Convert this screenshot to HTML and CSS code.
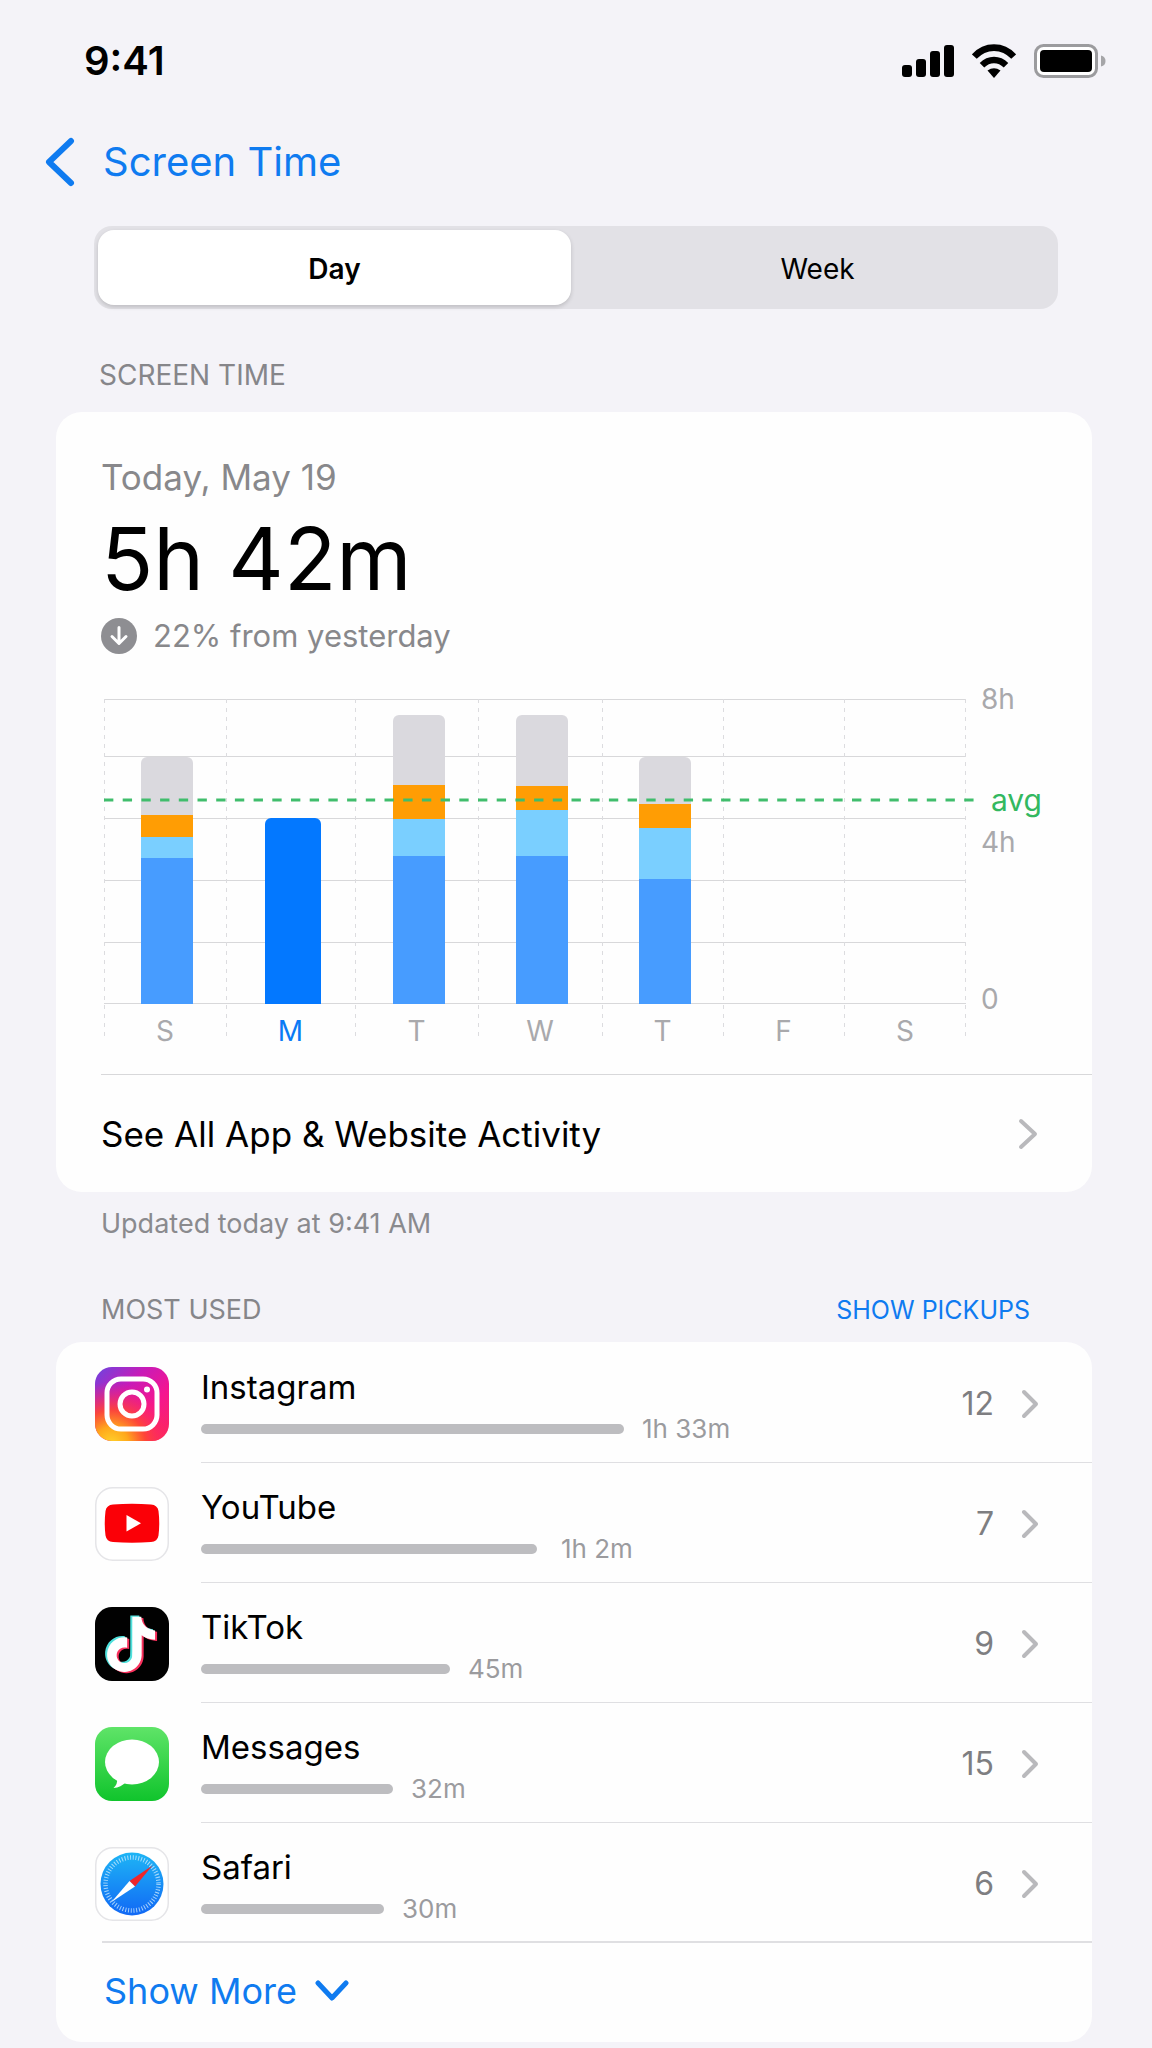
FILE: index.html
```html
<!DOCTYPE html>
<html lang="en">
<head>
<meta charset="utf-8">
<meta name="viewport" content="width=device-width, initial-scale=1">
<title>Screen Time</title>
<link rel="stylesheet" href="styles.css">
</head>
<body>
<div class="screen">
  <div class="status">
    <time class="clock">9:41</time>
    <div class="status-icons">
      <svg width="52" height="34" viewBox="0 0 52 34" aria-label="Signal" role="img">
        <rect x="0" y="21" width="10" height="12" rx="3"/><rect x="14" y="15" width="10" height="18" rx="3"/><rect x="28" y="7" width="10" height="26" rx="3"/><rect x="42" y="1" width="10" height="32" rx="3"/>
      </svg>
      <svg width="44" height="34" viewBox="0 0 44 34" aria-label="Wi-Fi" role="img">
        <g fill="none" stroke="#000"><path d="M2.3 12.6Q10.5 3.6 22 3.6T41.700 12.600" stroke-width="6.600"/><path d="M10 21.200Q15.200 16 22 16T34 21.200" stroke-width="6.400"/></g>
        <path d="M15.500 26.500Q22 21.800 28.500 26.500L22 34Z"/>
      </svg>
      <svg width="72" height="34" viewBox="0 0 72 34" aria-label="Battery" role="img">
        <rect x="1.500" y="1.500" width="61" height="31" rx="8" fill="#fff" stroke="#9b9b9e" stroke-width="3"/>
        <rect x="6" y="6" width="52" height="22" rx="4"/>
        <path d="M67 11.500Q71.500 12.500 71.500 17T67 22.500Z" fill="#a5a5a8"/>
      </svg>
    </div>
  </div>

  <nav>
    <a class="back" href="#">
      <svg width="30" height="50" viewBox="0 0 30 50" aria-hidden="true"><path d="M26 4L4 25L26 46" fill="none" stroke="currentColor" stroke-width="6" stroke-linecap="round" stroke-linejoin="round"/></svg>
      Screen Time
    </a>
  </nav>

  <div class="segmented" role="group" aria-label="Period">
    <button type="button" class="segment active" aria-pressed="true">Day</button>
    <button type="button" class="segment" aria-pressed="false">Week</button>
  </div>

  <h2 class="section-title">SCREEN TIME</h2>
  <section class="card usage">
    <p class="date">Today, May 19</p>
    <p class="total">5h 42m</p>
    <p class="trend">
      <svg width="36" height="36" viewBox="0 0 36 36" aria-hidden="true"><circle cx="18" cy="18" r="18" fill="#8e8e92"/><path d="M18 9.500V25M11 18.500L18 25.500L25 18.500" fill="none" stroke="#fff" stroke-width="3" stroke-linecap="round" stroke-linejoin="round"/></svg>
      22% from yesterday
    </p>

    <div class="chart">
      <div class="gridlines"><i></i><i></i><i></i><i></i><i></i></div>
      <div class="plot">
        <div class="day"><div class="bar"><i class="other" style="height:58px"></i><i class="orange" style="height:22px"></i><i class="sky" style="height:21px"></i><i class="blue" style="height:146px"></i></div><span>S</span></div>
        <div class="day today"><div class="bar"><i class="solid" style="height:186px"></i></div><span>M</span></div>
        <div class="day"><div class="bar"><i class="other" style="height:70px"></i><i class="orange" style="height:34px"></i><i class="sky" style="height:37px"></i><i class="blue" style="height:148px"></i></div><span>T</span></div>
        <div class="day"><div class="bar"><i class="other" style="height:71px"></i><i class="orange" style="height:24px"></i><i class="sky" style="height:46px"></i><i class="blue" style="height:148px"></i></div><span>W</span></div>
        <div class="day"><div class="bar"><i class="other" style="height:47px"></i><i class="orange" style="height:24px"></i><i class="sky" style="height:51px"></i><i class="blue" style="height:125px"></i></div><span>T</span></div>
        <div class="day"><div class="bar"></div><span>F</span></div>
        <div class="day last"><div class="bar"></div><span>S</span></div>
      </div>
      <div class="axis"><span>8h</span><span>4h</span><span>0</span></div>
      <div class="average">
        <div class="average-line"><svg width="100%" height="4" aria-hidden="true"><line x1="0" y1="2" x2="100%" y2="2" pathLength="470" stroke="#40bd6c" stroke-width="3" stroke-dasharray="5 5"/></svg></div>
        <span>avg</span>
      </div>
    </div>

    <a class="see-all" href="#">See All App &amp; Website Activity
      <svg class="chevron" width="20" height="32" viewBox="0 0 20 32" aria-hidden="true"><path d="M3 3L17 16L3 29"/></svg>
    </a>
  </section>
  <p class="updated">Updated today at 9:41 AM</p>

  <div class="section-head">
    <h2>MOST USED</h2>
    <button type="button" class="pickups">SHOW PICKUPS</button>
  </div>
  <section class="card">
    <ul class="apps">
      <li><a class="app" href="#">
        <svg class="icon" viewBox="0 0 74 74" aria-hidden="true">
          <defs>
            <linearGradient id="ig-base" x1="0" y1="0" x2="1" y2="1"><stop offset="0" stop-color="#6a45e0"/><stop offset=".35" stop-color="#c81bb8"/><stop offset=".65" stop-color="#f5158f"/><stop offset="1" stop-color="#fb2a58"/></linearGradient>
            <radialGradient id="ig-warm" cx=".22" cy="1.050" r=".85"><stop offset="0" stop-color="#ffd52b"/><stop offset=".28" stop-color="#ffa81c"/><stop offset=".55" stop-color="#ff4a30" stop-opacity=".9"/><stop offset="1" stop-color="#ff1a70" stop-opacity="0"/></radialGradient>
          </defs>
          <rect width="74" height="74" rx="17" fill="url(#ig-base)"/><rect width="74" height="74" rx="17" fill="url(#ig-warm)"/>
          <g fill="none" stroke="#fff" stroke-width="5"><rect x="12" y="12" width="50" height="50" rx="14"/><circle cx="37" cy="37" r="12"/></g><circle cx="52" cy="22.500" r="3" fill="#fff"/>
        </svg>
        <span class="info"><span class="name">Instagram</span><span class="use"><i style="width:423px"></i>1h 33m</span></span>
        <span class="count">12</span><svg class="chevron" width="20" height="32" viewBox="0 0 20 32" aria-hidden="true"><path d="M4 4L16 16L4 28"/></svg>
      </a></li>
      <li><a class="app" href="#">
        <svg class="icon" viewBox="0 0 74 74" aria-hidden="true">
          <rect x=".75" y=".75" width="72.500" height="72.500" rx="17" fill="#fff" stroke="#e5e5e8" stroke-width="1.500"/>
          <path d="M18 17.500Q37 16 56 17.500Q62.500 18 63.500 24Q65 36 63.500 48.500Q62.500 54.500 56 55Q37 56.500 18 55Q11.500 54.500 10.500 48.500Q9 36 10.500 24Q11.500 18 18 17.500Z" fill="#fb0007"/><path d="M31.500 28V44.500L46 36.300Z" fill="#fff"/>
        </svg>
        <span class="info"><span class="name">YouTube</span><span class="use wide"><i style="width:336px"></i>1h 2m</span></span>
        <span class="count">7</span><svg class="chevron" width="20" height="32" viewBox="0 0 20 32" aria-hidden="true"><path d="M4 4L16 16L4 28"/></svg>
      </a></li>
      <li><a class="app" href="#">
        <svg class="icon" viewBox="0 0 74 74" aria-hidden="true">
          <defs><path id="note" d="M12.525.02c1.310-.02 2.610-.01 3.910-.02.08 1.530.63 3.090 1.750 4.170 1.120 1.110 2.700 1.620 4.240 1.790v4.030c-1.440-.05-2.890-.35-4.200-.97-.57-.26-1.100-.59-1.620-.93-.01 2.920.01 5.840-.02 8.750-.08 1.400-.54 2.790-1.350 3.940-1.310 1.920-3.580 3.170-5.910 3.210-1.430.08-2.860-.31-4.080-1.030-2.020-1.190-3.440-3.370-3.650-5.710-.02-.5-.03-1-.01-1.490.18-1.900 1.120-3.720 2.580-4.960 1.660-1.440 3.980-2.130 6.150-1.720.02 1.480-.04 2.960-.04 4.440-.99-.32-2.150-.23-3.020.37-.63.41-1.110 1.040-1.360 1.750-.21.51-.15 1.070-.14 1.610.24 1.640 1.820 3.020 3.500 2.870 1.120-.01 2.190-.66 2.770-1.610.19-.33.4-.67.41-1.060.1-1.790.06-3.570.07-5.360.01-4.030-.01-8.050.02-12.070z"/></defs>
          <rect width="74" height="74" rx="17" fill="#010101"/>
          <use href="#note" transform="translate(6.500 8.500) scale(2.300)" fill="#4fe0dc"/><use href="#note" transform="translate(10.500 11) scale(2.300)" fill="#f8305c"/><use href="#note" transform="translate(8.500 9.700) scale(2.300)" fill="#fff"/>
        </svg>
        <span class="info"><span class="name">TikTok</span><span class="use"><i style="width:249px"></i>45m</span></span>
        <span class="count">9</span><svg class="chevron" width="20" height="32" viewBox="0 0 20 32" aria-hidden="true"><path d="M4 4L16 16L4 28"/></svg>
      </a></li>
      <li><a class="app" href="#">
        <svg class="icon" viewBox="0 0 74 74" aria-hidden="true">
          <defs><linearGradient id="msg" x1="0" y1="0" x2="0" y2="1"><stop offset="0" stop-color="#5fe468"/><stop offset="1" stop-color="#10c42c"/></linearGradient></defs>
          <rect width="74" height="74" rx="17" fill="url(#msg)"/>
          <ellipse cx="37" cy="35" rx="27" ry="22.500" fill="#fff"/><path d="M22 51Q23 57 18.500 61Q26 60.500 31 55Z" fill="#fff"/>
        </svg>
        <span class="info"><span class="name">Messages</span><span class="use"><i style="width:192px"></i>32m</span></span>
        <span class="count">15</span><svg class="chevron" width="20" height="32" viewBox="0 0 20 32" aria-hidden="true"><path d="M4 4L16 16L4 28"/></svg>
      </a></li>
      <li><a class="app" href="#">
        <svg class="icon" viewBox="0 0 74 74" aria-hidden="true">
          <defs><linearGradient id="compass" x1="0" y1="0" x2="0" y2="1"><stop offset="0" stop-color="#1eb5f5"/><stop offset="1" stop-color="#1168f5"/></linearGradient></defs>
          <rect x=".75" y=".75" width="72.500" height="72.500" rx="17" fill="#fff" stroke="#e5e5e8" stroke-width="1.500"/>
          <circle cx="37" cy="37" r="31.500" fill="url(#compass)"/>
          <circle cx="37" cy="37" r="26.500" fill="none" stroke="#d5efff" stroke-opacity=".75" stroke-width="4.500" stroke-dasharray="1 1.775"/>
          <path d="M57.500 18.500L34.500 34L40 39.500Z" fill="#f0262a"/><path d="M16.500 55L34.500 34L40 39.500Z" fill="#fff"/>
        </svg>
        <span class="info"><span class="name">Safari</span><span class="use"><i style="width:183px"></i>30m</span></span>
        <span class="count">6</span><svg class="chevron" width="20" height="32" viewBox="0 0 20 32" aria-hidden="true"><path d="M4 4L16 16L4 28"/></svg>
      </a></li>
    </ul>
    <button type="button" class="more">Show More
      <svg width="34" height="22" viewBox="0 0 34 22" aria-hidden="true"><path d="M3 3L17 18L31 3" fill="none" stroke="currentColor" stroke-width="5" stroke-linecap="round" stroke-linejoin="round"/></svg>
    </button>
  </section>
</div>
</body>
</html>
```
FILE: styles.css
```css
* { box-sizing: border-box; }
body {
  margin: 0;
  background: #f4f3f8;
  color: #000;
  font-family: Inter, "Liberation Sans", sans-serif;
}
h2, p, ul { margin: 0; padding: 0; font-weight: 400; }
ul { list-style: none; }
a { color: inherit; text-decoration: none; }
button { border: 0; background: none; padding: 0; font: inherit; color: inherit; cursor: pointer; }
svg { display: block; flex: none; }
i { display: block; }

.screen { padding: 0 60px 6px 56px; }

.status { display: flex; justify-content: space-between; align-items: center; height: 122px; margin-right: -14px; padding-left: 28px; }
.clock { font-size: 40px; font-weight: 600; line-height: 48px; }
.status-icons { display: flex; gap: 18px; }

.back { display: inline-flex; align-items: center; gap: 28px; height: 80px; margin-left: -11px; color: #0f7bf0; font-size: 40px; line-height: 50px; }

.segmented { display: flex; gap: 10px; height: 83px; margin: 24px 34px 0 38px; padding: 4px; border-radius: 18px; background: #e2e1e6; }
.segment { flex: 1; padding-top: 2px; border-radius: 16px; font-size: 28px; line-height: 36px; }
.segment.active { background: #fff; font-weight: 600; box-shadow: 0 2px 4px rgba(0, 0, 0, .16); }

.section-title { margin: 48px 0 19px; padding-left: 43px; color: #86868a; font-size: 28px; line-height: 36px; }

.card { overflow: hidden; border-radius: 26px; background: #fefefe; }
.usage { padding: 42px 0 0 45px; }
.date { color: #88888b; font-size: 35px; line-height: 46px; }
.total { font-size: 86px; line-height: 118px; }
.trend { display: flex; align-items: center; gap: 16px; height: 36px; color: #88888b; font-size: 31px; line-height: 36px; }

.chart { display: grid; grid-template-columns: 1fr 126px; margin-top: 27px; padding-left: 3px; }
.gridlines { grid-area: 1 / 1; display: grid; grid-template-rows: 57px 62px 62px 62px 62px; padding-top: 18px; }
.gridlines i { border-top: 1px solid #d8d8da; }
.gridlines i:last-child { border-bottom: 1px solid #d8d8da; }
.plot { grid-area: 1 / 1; display: grid; grid-template-columns: 122fr 129fr 123fr 124fr 121fr 121fr 122fr; padding-top: 18px; }
.day {
  display: flex;
  flex-direction: column;
  background: repeating-linear-gradient(#dcdcdf 0 4px, transparent 4px 9px) left / 1px 100% no-repeat;
}
.day.last {
  background:
    repeating-linear-gradient(#dcdcdf 0 4px, transparent 4px 9px) left / 1px 100% no-repeat,
    repeating-linear-gradient(#dcdcdf 0 4px, transparent 4px 9px) right / 1px 100% no-repeat;
}
.bar { display: flex; flex-direction: column; justify-content: flex-end; align-self: center; width: 52px; height: 305px; margin-left: 4px; }
.bar i:first-child { border-radius: 6px 6px 0 0; }
.today .bar { width: 56px; }
.day span { height: 32px; padding-top: 9px; color: #a9a9ac; font-size: 28px; line-height: 36px; text-align: center; }
.today span { color: #0a7af5; }
.other { background: #dad9de; }
.orange { background: #ff9d04; }
.sky { background: #7acfff; }
.blue { background: #479cff; }
.solid { background: #0378ff; }
.axis { grid-area: 1 / 2; display: grid; grid-template-rows: 143px 157px 36px; padding-left: 15px; color: #a9a9ac; font-size: 28px; line-height: 36px; }
.average { grid-area: 1 / 1 / 2 / 3; align-self: start; display: flex; align-items: center; gap: 8px; margin-top: 98px; padding-right: 50px; color: #33b860; font-size: 30px; line-height: 42px; }
.average-line { flex: 1; }

.see-all { display: flex; align-items: center; justify-content: space-between; height: 118px; margin-top: 38px; padding-right: 54px; border-top: 1px solid #d8d8da; font-size: 35px; line-height: 46px; }
.chevron path { fill: none; stroke: #b9b9bc; stroke-width: 4; stroke-linecap: round; stroke-linejoin: round; }

.updated { margin-top: 14px; padding-left: 45px; color: #8a8a8e; font-size: 27px; line-height: 36px; }
.section-head { display: flex; align-items: center; justify-content: space-between; margin: 50px 0 14px; padding: 0 62px 0 45px; }
.section-head h2 { color: #86868a; font-size: 27px; line-height: 36px; }
.pickups { color: #0f7bf0; font-size: 25px; line-height: 36px; }

.apps { padding-top: 1px; }
.app { display: flex; align-items: center; height: 120px; padding: 2px 52px 0 39px; }
.icon { width: 74px; height: 74px; }
.info { flex: 1; display: flex; flex-direction: column; align-self: stretch; gap: 3px; margin-left: 32px; padding-top: 21px; }
.name { font-size: 33px; line-height: 42px; }
.use { display: flex; align-items: center; gap: 18px; color: #9b9b9e; font-size: 26px; line-height: 36px; }
.use.wide { gap: 24px; }
.use i { height: 10px; border-radius: 5px; background: #bdbdc0; }
.count { margin-right: 26px; color: #7e7e81; font-size: 32px; line-height: 40px; }
.apps li { background: linear-gradient(#dfdfe2, #dfdfe2) 145px bottom / 100% 1px no-repeat; }
.apps li:last-child { background-position: 46px bottom; background-size: 100% 2px; }
.more { display: flex; align-items: center; gap: 18px; width: 100%; height: 99px; padding: 0 0 4px 48px; color: #0f7bf0; font-size: 36px; line-height: 46px; }
```
